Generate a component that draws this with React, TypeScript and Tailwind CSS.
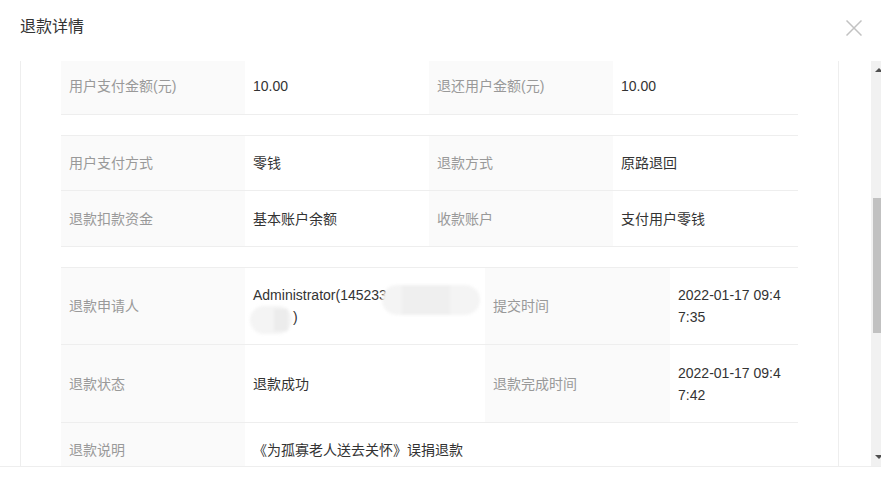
import React from "react";

const font = { fontFamily: '"Liberation Sans", Arial, "Noto Sans CJK SC", sans-serif' };

function Label({ w, children }: { w: string; children: React.ReactNode }) {
  return (
    <div className={`${w} shrink-0 bg-[#fafafa] text-[#999999] pl-2 flex items-center`}>{children}</div>
  );
}

function Value({ w, children }: { w: string; children: React.ReactNode }) {
  return <div className={`${w} shrink-0 text-[#333333] pl-2 flex items-center`}>{children}</div>;
}

export default function App() {
  return (
    <div className="w-[881px] h-[484px] bg-white overflow-hidden text-[14px] leading-[22px]" style={font}>
      {/* header */}
      <div className="h-[61px] flex justify-between items-start pl-5 pr-[19px] pt-[17px]">
        <div className="text-[16px] leading-[20px] text-[#333333]">退款详情</div>
        <svg className="mt-[3px] w-4 h-4" viewBox="0 0 16 16" fill="none">
          <path d="M0.5 0.5 L15.5 15.5 M15.5 0.5 L0.5 15.5" stroke="#c2c2c2" strokeWidth="1.5" />
        </svg>
      </div>

      {/* body */}
      <div className="h-[405px] flex">
        <div className="w-[871px] h-full overflow-hidden">
          <div className="ml-5 w-[819px] h-full border-l border-r border-[#eeeeee] px-10">
            {/* table 1 */}
            <div className="flex h-[54px] border-b border-[#eeeeee]">
              <div className="w-[184px] shrink-0 bg-[#fafafa] text-[#999999] pl-2 pb-[3px] flex items-center">用户支付金额(元)</div>
              <div className="w-[184px] shrink-0 text-[#333333] pl-2 pb-[3px] flex items-center">10.00</div>
              <div className="w-[184px] shrink-0 bg-[#fafafa] text-[#999999] pl-2 pb-[3px] flex items-center">退还用户金额(元)</div>
              <div className="w-[185px] shrink-0 text-[#333333] pl-2 pb-[3px] flex items-center">10.00</div>
            </div>

            {/* table 2 */}
            <div className="mt-5 border-t border-[#eeeeee]">
              <div className="flex h-[55px] border-b border-[#eeeeee]">
                <Label w="w-[184px]">用户支付方式</Label>
                <Value w="w-[184px]">零钱</Value>
                <Label w="w-[184px]">退款方式</Label>
                <Value w="w-[185px]">原路退回</Value>
              </div>
              <div className="flex h-[56px] border-b border-[#eeeeee]">
                <Label w="w-[184px]">退款扣款资金</Label>
                <Value w="w-[184px]">基本账户余额</Value>
                <Label w="w-[184px]">收款账户</Label>
                <Value w="w-[185px]">支付用户零钱</Value>
              </div>
            </div>

            {/* table 3 */}
            <div className="mt-5 border-t border-[#eeeeee]">
              <div className="flex h-[77px] border-b border-[#eeeeee]">
                <Label w="w-[184px]">退款申请人</Label>
                <div className="w-[240px] shrink-0 text-[#333333] pl-2 flex items-center relative">
                  <div className="whitespace-nowrap">
                    <div>Administrator(145233</div>
                    <div>
                      <span className="inline-block w-[40px]"></span>)
                    </div>
                  </div>
                  <div className="absolute left-[137px] top-[17px] w-[98px] h-[30px] rounded-full bg-[#f4f4f4] blur-[1.5px] flex items-center justify-center">
                    <div className="w-[48px] h-[30px] bg-[#efefef] ml-[-10px]"></div>
                  </div>
                  <div className="absolute left-[5px] top-[38px] w-[42px] h-[28px] rounded-full bg-[#f4f4f4] blur-[1.5px] flex items-center justify-end pr-[4px]">
                    <div className="w-[14px] h-[22px] bg-[#ececec]"></div>
                  </div>
                </div>
                <Label w="w-[185px]">提交时间</Label>
                <div className="w-[128px] shrink-0 text-[#333333] pl-2 flex items-center">
                  <div>
                    <div>2022-01-17 09:4</div>
                    <div>7:35</div>
                  </div>
                </div>
              </div>
              <div className="flex h-[78px] border-b border-[#eeeeee]">
                <Label w="w-[184px]">退款状态</Label>
                <Value w="w-[240px]">退款成功</Value>
                <Label w="w-[185px]">退款完成时间</Label>
                <div className="w-[128px] shrink-0 text-[#333333] pl-2 flex items-center">
                  <div>
                    <div>2022-01-17 09:4</div>
                    <div>7:42</div>
                  </div>
                </div>
              </div>
              <div className="flex h-[55px] border-b border-[#eeeeee]">
                <Label w="w-[184px]">退款说明</Label>
                <Value w="w-[553px]">《为孤寡老人送去关怀》误捐退款</Value>
              </div>
            </div>
          </div>
        </div>

        {/* scrollbar */}
        <div className="w-[10px] h-full bg-[#f1f1f1] relative">
          <div className="absolute left-[4px] top-[7px] w-0 h-0 border-l-[4px] border-r-[4px] border-b-[4px] border-l-transparent border-r-transparent border-b-[#505050]"></div>
          <div className="absolute left-[2px] top-[137px] w-[8px] h-[135px] bg-[#c1c1c1]"></div>
          <div className="absolute left-[4px] bottom-[7px] w-0 h-0 border-l-[4px] border-r-[4px] border-t-[4px] border-l-transparent border-r-transparent border-t-[#505050]"></div>
        </div>
      </div>

      {/* footer line */}
      <div className="border-t border-[#eeeeee] h-[18px]"></div>
    </div>
  );
}
